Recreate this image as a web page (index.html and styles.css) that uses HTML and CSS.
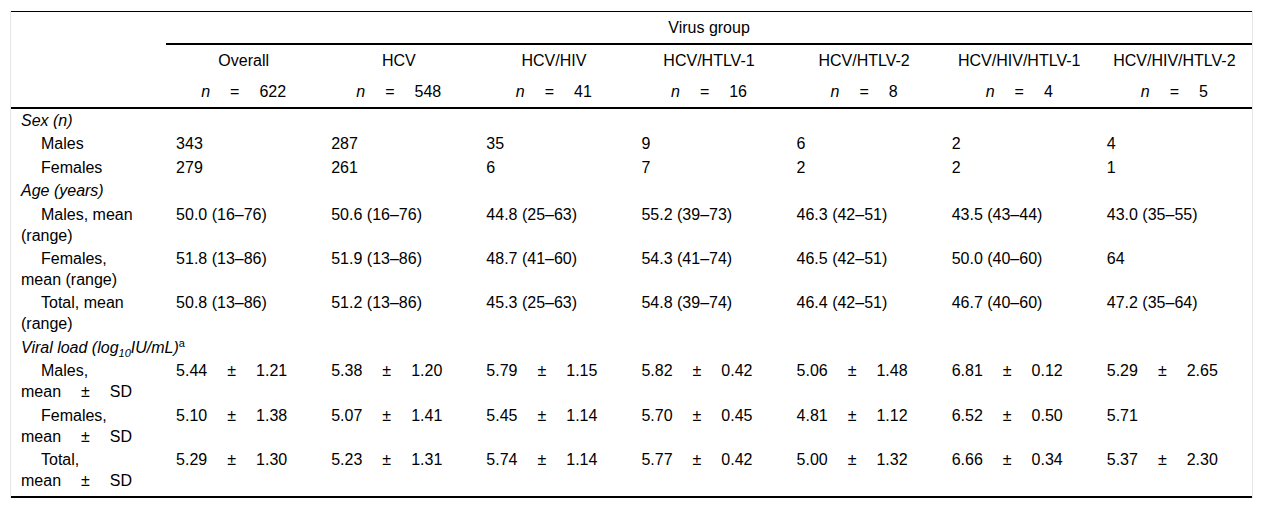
FILE: index.html
```html
<!DOCTYPE html>
<html lang="en">
<head>
<meta charset="utf-8">
<title>Virus group table</title>
<link rel="stylesheet" href="styles.css">
</head>
<body>
<div class="wrap">
<table class="tbl">
<colgroup>
<col class="c"><col class="c"><col class="c"><col class="c"><col class="c"><col class="c"><col class="c"><col class="c">
</colgroup>
<thead>
<tr>
<th class="blank"></th>
<th class="group" colspan="7">Virus group</th>
</tr>
<tr>
<th class="blank"></th>
<th class="hd">Overall</th>
<th class="hd">HCV</th>
<th class="hd">HCV/HIV</th>
<th class="hd">HCV/HTLV-1</th>
<th class="hd">HCV/HTLV-2</th>
<th class="hd">HCV/HIV/HTLV-1</th>
<th class="hd">HCV/HIV/HTLV-2</th>
</tr>
<tr class="nrow">
<th class="blank"></th>
<th class="hd"><i>n</i><span class="op">=</span>622</th>
<th class="hd"><i>n</i><span class="op">=</span>548</th>
<th class="hd"><i>n</i><span class="op">=</span>41</th>
<th class="hd"><i>n</i><span class="op">=</span>16</th>
<th class="hd"><i>n</i><span class="op">=</span>8</th>
<th class="hd"><i>n</i><span class="op">=</span>4</th>
<th class="hd"><i>n</i><span class="op">=</span>5</th>
</tr>
</thead>
<tbody>
<tr><td class="sec" colspan="8"><i>Sex (n)</i></td></tr>
<tr><td class="lbl">Males</td><td>343</td><td>287</td><td>35</td><td>9</td><td>6</td><td>2</td><td>4</td></tr>
<tr><td class="lbl">Females</td><td>279</td><td>261</td><td>6</td><td>7</td><td>2</td><td>2</td><td>1</td></tr>
<tr><td class="sec" colspan="8"><i>Age (years)</i></td></tr>
<tr><td class="lbl">Males, mean<br>(range)</td><td>50.0 (16–76)</td><td>50.6 (16–76)</td><td>44.8 (25–63)</td><td>55.2 (39–73)</td><td>46.3 (42–51)</td><td>43.5 (43–44)</td><td>43.0 (35–55)</td></tr>
<tr><td class="lbl">Females,<br>mean (range)</td><td>51.8 (13–86)</td><td>51.9 (13–86)</td><td>48.7 (41–60)</td><td>54.3 (41–74)</td><td>46.5 (42–51)</td><td>50.0 (40–60)</td><td>64</td></tr>
<tr><td class="lbl">Total, mean<br>(range)</td><td>50.8 (13–86)</td><td>51.2 (13–86)</td><td>45.3 (25–63)</td><td>54.8 (39–74)</td><td>46.4 (42–51)</td><td>46.7 (40–60)</td><td>47.2 (35–64)</td></tr>
<tr><td class="sec" colspan="8"><i>Viral load (log<sub>10</sub>IU/mL)</i><sup>a</sup></td></tr>
<tr><td class="lbl">Males,<br>mean<span class="op">±</span>SD</td><td>5.44<span class="op">±</span>1.21</td><td>5.38<span class="op">±</span>1.20</td><td>5.79<span class="op">±</span>1.15</td><td>5.82<span class="op">±</span>0.42</td><td>5.06<span class="op">±</span>1.48</td><td>6.81<span class="op">±</span>0.12</td><td>5.29<span class="op">±</span>2.65</td></tr>
<tr><td class="lbl">Females,<br>mean<span class="op">±</span>SD</td><td>5.10<span class="op">±</span>1.38</td><td>5.07<span class="op">±</span>1.41</td><td>5.45<span class="op">±</span>1.14</td><td>5.70<span class="op">±</span>0.45</td><td>4.81<span class="op">±</span>1.12</td><td>6.52<span class="op">±</span>0.50</td><td>5.71</td></tr>
<tr class="last"><td class="lbl">Total,<br>mean<span class="op">±</span>SD</td><td>5.29<span class="op">±</span>1.30</td><td>5.23<span class="op">±</span>1.31</td><td>5.74<span class="op">±</span>1.14</td><td>5.77<span class="op">±</span>0.42</td><td>5.00<span class="op">±</span>1.32</td><td>6.66<span class="op">±</span>0.34</td><td>5.37<span class="op">±</span>2.30</td></tr>
</tbody>
</table>
</div>
</body>
</html>
```

FILE: styles.css
```css
html, body {
  margin: 0;
  padding: 0;
  background: #ffffff;
}

body {
  font-family: "Liberation Sans", Arial, Helvetica, sans-serif;
  font-size: 16px;
  color: #000000;
}

.wrap {
  margin: 11px 10px 0 10px;
  width: 1241px;
  border-left: 1px solid #e6e6e6;
  border-right: 1px solid #e6e6e6;
}

.tbl {
  width: 1241px;
  table-layout: fixed;
  border-collapse: separate;
  border-spacing: 0;
  border-top: 1px solid #000;
  border-bottom: 2px solid #000;
}

.c {
  width: 155px;
}

.tbl th {
  font-weight: normal;
  line-height: 21px;
  padding: 5px 10px;
  text-align: center;
  vertical-align: middle;
}

.tbl th.group {
  border-bottom: 2px solid #000;
}

.tbl tr.nrow th {
  border-bottom: 2px solid #000;
}

.tbl td {
  line-height: 21px;
  padding: 1px 10px 1.4px 10px;
  text-align: left;
  vertical-align: top;
  white-space: nowrap;
}

.tbl td.lbl {
  text-indent: 20px;
}

.tbl tr.last td {
  padding-bottom: 5px;
}

.op {
  margin: 0 20px;
}

.tbl i {
  font-style: italic;
}

sub {
  font-size: 11px;
  line-height: 0;
  vertical-align: -4px;
}

sup {
  font-size: 11px;
  line-height: 0;
  vertical-align: 6px;
  font-style: normal;
}
```
